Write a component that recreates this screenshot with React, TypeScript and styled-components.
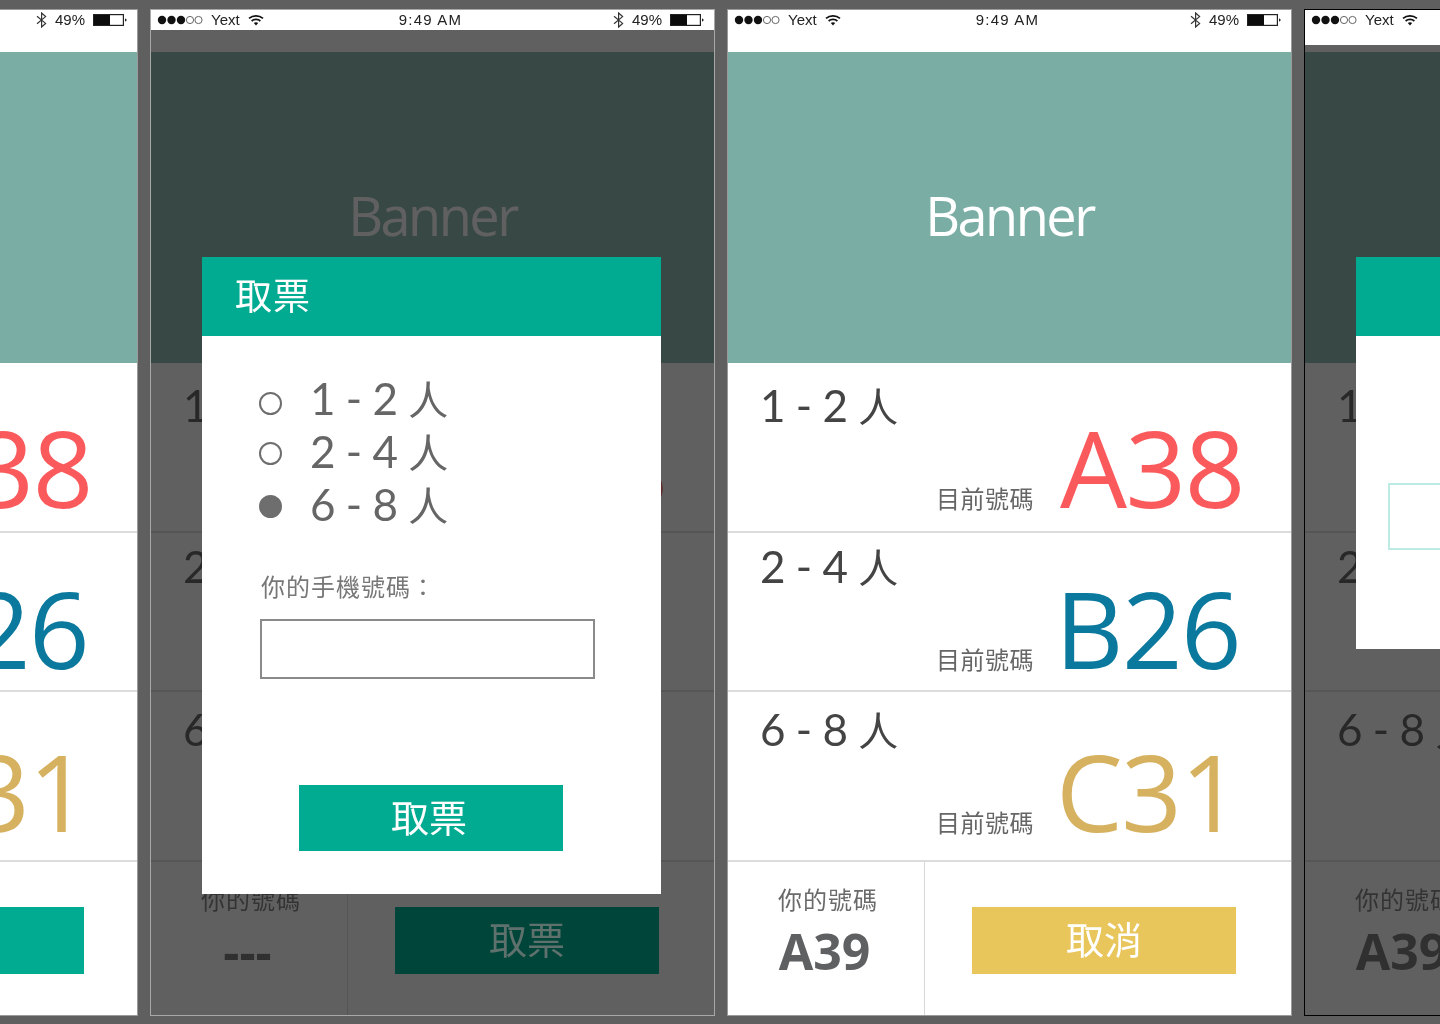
import React from 'react';
import styled, { createGlobalStyle } from 'styled-components';

const CJK = '"Noto Sans CJK TC", "Noto Sans CJK SC", sans-serif';

const Global = createGlobalStyle`
  html, body { margin: 0; padding: 0; background: #5f5f5f; }
  * { box-sizing: border-box; }
`;

const Stage = styled.div`
  width: 1440px;
  height: 1024px;
  overflow: hidden;
  background: #5f5f5f;
  display: flex;
  gap: 12px;
  padding: 9px 0 0 0;
  filter: blur(0.45px);
`;

const Phone = styled.section<{ $width: number; $edge: string; $first?: boolean }>`
  position: relative;
  flex: none;
  width: ${p => p.$width}px;
  height: 1007px;
  margin-left: ${p => (p.$first ? '-425px' : '0')};
  background: #fff;
  border: 1px solid ${p => p.$edge};
  display: flex;
  flex-direction: column;
  overflow: hidden;
`;

const StatusBar = styled.header<{ $height: number }>`
  position: relative;
  z-index: 2;
  flex: none;
  height: ${p => p.$height}px;
  background: #fff;
  padding: 0 10px 0 6px;
  display: grid;
  grid-template-columns: 1fr auto 1fr;
  align-items: start;
  font: 15px/19px "Liberation Sans", Arial, sans-serif;
  color: #222;
`;

const StatusSide = styled.div<{ $end?: boolean }>`
  display: flex;
  align-items: center;
  height: 19px;
  justify-content: ${p => (p.$end ? 'flex-end' : 'flex-start')};
  gap: 8px;
`;

const Clock = styled.span`
  letter-spacing: 1.2px;
`;

const TopGap = styled.div<{ $height: number }>`
  flex: none;
  height: ${p => p.$height}px;
  background: #fff;
`;

const Banner = styled.div`
  flex: none;
  height: 311px;
  background: #7aaea5;
  display: flex;
  align-items: center;
  justify-content: center;
  color: #fff;
  font: 400 54px/1 "Open Sans", sans-serif;
  letter-spacing: -2.5px;
  padding-top: 15px;
`;

const Row = styled.div<{ $height: number; $top: number }>`
  flex: none;
  height: ${p => p.$height}px;
  padding: ${p => p.$top}px 0 0 32px;
  border-bottom: 2px solid #dcdcdc;
  display: flex;
  flex-direction: column;
`;

const Range = styled.div<{ $color: string }>`
  font: 400 44px/44px Lato, ${CJK};
  color: ${p => p.$color};
  white-space: pre;
  word-spacing: -1px;
`;

const Person = styled.span`
  font: 400 40px/44px ${CJK};
`;

const Current = styled.div<{ $gap: number }>`
  display: flex;
  align-items: baseline;
  gap: ${p => p.$gap}px;
  margin-top: -13px;
  padding-left: 176px;
`;

const CurrentLabel = styled.span`
  font: 400 24px/30px ${CJK};
  color: #666;
  letter-spacing: 0.5px;
`;

const Code = styled.span<{ $color: string }>`
  font: 400 106px/1 "Open Sans", sans-serif;
  letter-spacing: -1.5px;
  color: ${p => p.$color};
`;

const Footer = styled.div`
  flex: 1;
  display: flex;
`;

const Yours = styled.div`
  flex: none;
  width: 197px;
  border-right: 1px solid #d8d8d8;
  padding: 22px 0 0 4px;
  display: flex;
  flex-direction: column;
  align-items: center;
`;

const YoursLabel = styled.div`
  font: 400 24px/30px ${CJK};
  letter-spacing: 1px;
  color: #6a6a6a;
`;

const YoursCode = styled.div`
  margin: 12px 0 0 -7px;
  font: 700 50px/50px "Open Sans", sans-serif;
  color: #5f6062;
`;

const Action = styled.div<{ $color: string; $ink: string; $raised?: boolean }>`
  position: relative;
  z-index: ${p => (p.$raised ? 2 : 0)};
  flex: none;
  align-self: flex-start;
  width: 264px;
  height: 67px;
  margin: 45px 0 0 47px;
  padding-bottom: 5px;
  background: ${p => p.$color};
  color: ${p => p.$ink};
  display: flex;
  align-items: center;
  justify-content: center;
  font: 400 38px/1 ${CJK};
`;

const Overlay = styled.div`
  position: absolute;
  inset: 0;
  z-index: 1;
  background: rgba(28, 28, 28, 0.7);
`;

const Modal = styled.div<{ $height: number }>`
  position: absolute;
  z-index: 3;
  top: 247px;
  left: 51px;
  width: 459px;
  height: ${p => p.$height}px;
  background: #fff;
  display: flex;
  flex-direction: column;
`;

const ModalHead = styled.div`
  flex: none;
  height: 79px;
  background: #00ab91;
  padding: 0 0 4px 33px;
  display: flex;
  align-items: center;
  color: #fff;
  font: 400 37px/1 ${CJK};
  letter-spacing: 1px;
`;

const ModalBody = styled.div`
  padding: 40px 0 0 57px;
  display: flex;
  flex-direction: column;
  align-items: flex-start;
`;

const Options = styled.div`
  display: flex;
  flex-direction: column;
  gap: 9px;
`;

const Option = styled.label`
  display: flex;
  align-items: flex-start;
  gap: 28px;
`;

const Radio = styled.span<{ $on?: boolean; $top: number }>`
  flex: none;
  width: 23px;
  height: 23px;
  margin-top: ${p => p.$top}px;
  border-radius: 50%;
  border: 2px solid #6e6e6e;
  background: ${p => (p.$on ? '#6e6e6e' : '#fff')};
`;

const FieldLabel = styled.div`
  margin: 45px 0 0 2px;
  font: 400 24px/30px ${CJK};
  letter-spacing: 1px;
  color: #777;
`;

const Field = styled.input`
  display: block;
  width: 335px;
  height: 60px;
  margin: 18px 0 0 1px;
  border: 2px solid #8a8a8a;
  background: #fff;
  outline: none;
`;

const Submit = styled.button`
  width: 264px;
  height: 66px;
  margin: 106px 0 0 40px;
  border: none;
  padding: 0 4px 5px 0;
  background: #00ab91;
  color: #fff;
  font: 400 38px/1 ${CJK};
`;

const GhostBox = styled.div`
  width: 264px;
  height: 67px;
  margin: 147px 0 0 32px;
  border: 2px solid #bdeae2;
`;

const Dots = () => (
  <svg width="46" height="12" viewBox="0 0 46 12" aria-hidden>
    <circle cx="5" cy="6" r="4.2" fill="#111" />
    <circle cx="14.5" cy="6" r="4.2" fill="#111" />
    <circle cx="24" cy="6" r="4.2" fill="#111" />
    <circle cx="33" cy="6" r="3.6" fill="none" stroke="#555" strokeWidth="0.9" />
    <circle cx="41.5" cy="6" r="3.6" fill="none" stroke="#555" strokeWidth="0.9" />
  </svg>
);

const Wifi = () => (
  <svg width="16" height="12" viewBox="0 0 16 12" aria-hidden>
    <path d="M1 4.4C5 .9 11 .9 15 4.4" fill="none" stroke="#111" strokeWidth="1.7" />
    <path d="M3.6 7C6 4.9 10 4.9 12.4 7" fill="none" stroke="#111" strokeWidth="1.7" />
    <path d="M5.8 9.1 8 11.4l2.2-2.3C9 8 7 8 5.8 9.1Z" fill="#111" />
  </svg>
);

const Bluetooth = () => (
  <svg width="11" height="16" viewBox="0 0 11 16" aria-hidden>
    <path d="M1 4.3 9.6 11.4 5.6 15V1l4 3.6L1 11.7" fill="none" stroke="#333" strokeWidth="1.2" />
  </svg>
);

const Battery = () => (
  <svg width="34" height="12" viewBox="0 0 34 12" aria-hidden>
    <rect x=".6" y=".6" width="29.8" height="10.8" fill="#fff" stroke="#222" strokeWidth="1.2" />
    <rect x="1" y="1" width="16" height="10" fill="#0c0c0c" />
    <path d="M32 4.2 34 6l-2 1.8Z" fill="#222" />
  </svg>
);

const rows = [
  { range: '1 - 2 ', code: 'A38', color: '#fb5a5c', height: 170, top: 20, gap: 26 },
  { range: '2 - 4 ', code: 'B26', color: '#0a799d', height: 159, top: 11, gap: 21 },
  { range: '6 - 8 ', code: 'C31', color: '#d6b15f', height: 170, top: 15, gap: 22 },
];

type ScreenProps = {
  width: number;
  edge: string;
  first?: boolean;
  statusHeight?: number;
  dim?: boolean;
  modal?: 'form' | 'sent';
  yours: string;
  action: string;
  actionColor: string;
  actionInk?: string;
};

const Screen = ({ width, edge, first, statusHeight = 20, dim, modal, yours, action, actionColor, actionInk = '#fff' }: ScreenProps) => (
  <Phone $width={width} $edge={edge} $first={first}>
    <StatusBar $height={statusHeight}>
      <StatusSide>
        <Dots />
        <span>Yext</span>
        <Wifi />
      </StatusSide>
      <Clock>9:49 AM</Clock>
      <StatusSide $end>
        <Bluetooth />
        <span>49%</span>
        <Battery />
      </StatusSide>
    </StatusBar>
    <TopGap $height={42 - statusHeight} />
    <Banner>Banner</Banner>
    {rows.map(r => (
      <Row key={r.code} $height={r.height} $top={r.top}>
        <Range $color="#444">
          {r.range}
          <Person>人</Person>
        </Range>
        <Current $gap={r.gap}>
          <CurrentLabel>目前號碼</CurrentLabel>
          <Code $color={r.color}>{r.code}</Code>
        </Current>
      </Row>
    ))}
    <Footer>
      <Yours>
        <YoursLabel>你的號碼</YoursLabel>
        <YoursCode>{yours}</YoursCode>
      </Yours>
      <Action $color={actionColor} $ink={actionInk} $raised={dim}>{action}</Action>
    </Footer>
    {dim && <Overlay />}
    {modal === 'form' && (
      <Modal $height={637}>
        <ModalHead>取票</ModalHead>
        <ModalBody>
          <Options>
            {rows.map((r, i) => (
              <Option key={r.code}>
                <Radio $on={i === 2} $top={i === 0 ? 16 : 13} />
                <Range $color="#666">
                  {r.range}
                  <Person>人</Person>
                </Range>
              </Option>
            ))}
          </Options>
          <FieldLabel>你的手機號碼：</FieldLabel>
          <Field type="text" />
          <Submit type="button">取票</Submit>
        </ModalBody>
      </Modal>
    )}
    {modal === 'sent' && (
      <Modal $height={392}>
        <ModalHead />
        <GhostBox />
      </Modal>
    )}
  </Phone>
);

export default function App() {
  return (
    <>
      <Global />
      <Stage>
        <Screen first width={563} edge="#9a9a9a" yours="---" action="取票" actionColor="#00ab91" />
        <Screen width={565} edge="#a8a8a8" dim modal="form" yours="---" action="取票" actionColor="#00453a" actionInk="#5f716c" />
        <Screen width={565} edge="#9a9a9a" yours="A39" action="取消" actionColor="#e8c65b" />
        <Screen width={565} edge="#000" statusHeight={35} dim modal="sent" yours="A39" action="取消" actionColor="#5a4f2e" actionInk="#5f5f5f" />
      </Stage>
    </>
  );
}
